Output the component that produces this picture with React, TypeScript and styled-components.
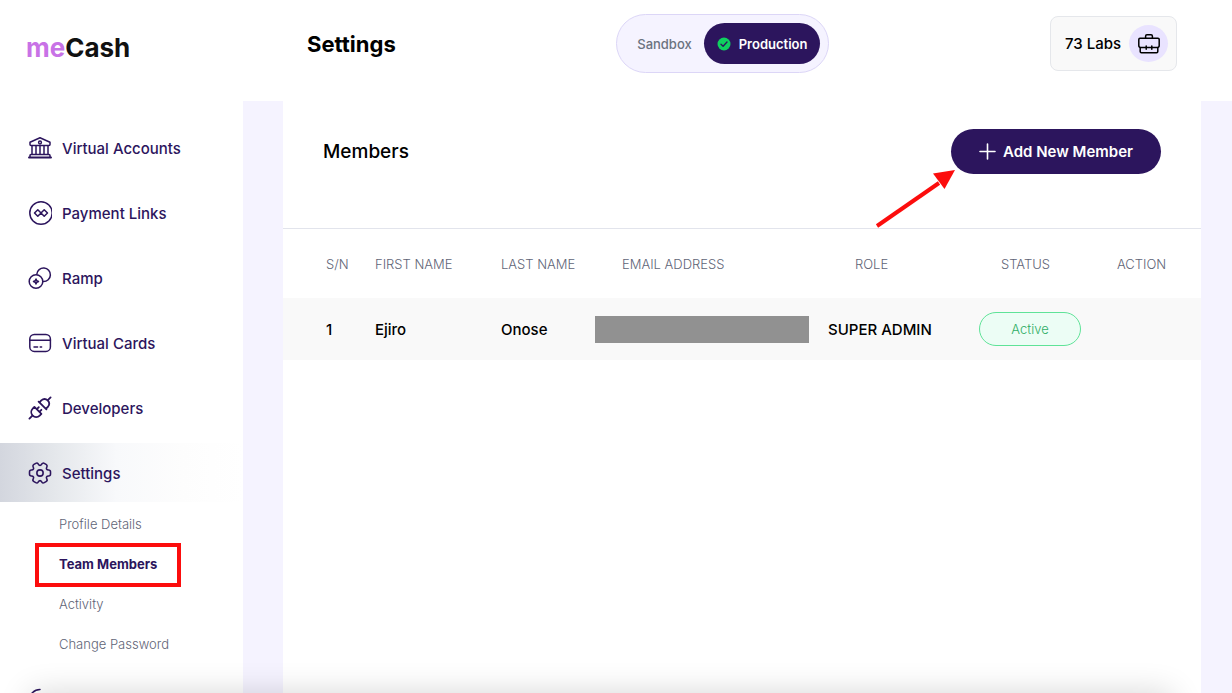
import React from "react";
import styled, { createGlobalStyle, css } from "styled-components";

const ink = "#2c155d";

const GlobalStyle = createGlobalStyle`
  *, *::before, *::after { box-sizing: border-box; }
  body {
    margin: 0;
    background: #fff;
    color: #000;
    font-family: Inter, "Liberation Sans", sans-serif;
    font-size: 15px;
  }
  button { font: inherit; border: 0; cursor: pointer; }
  a { color: inherit; text-decoration: none; }
  h1, h2, ul { margin: 0; padding: 0; }
  ul { list-style: none; }
`;

const Page = styled.div`
  display: grid;
  grid-template-columns: 243px 1fr;
  grid-template-rows: 101px 1fr;
  height: 100vh;
  overflow: hidden;
`;

const Brand = styled.a`
  display: flex;
  align-items: center;
  padding: 0 0 6px 26px;
  font-size: 26px;
  font-weight: 700;
  color: #111;
`;

const BrandAccent = styled.span`
  color: #c872e6;
`;

const Header = styled.header`
  display: flex;
  align-items: center;
  justify-content: space-between;
  padding: 0 55px 14px 64px;
`;

const PageTitle = styled.h1`
  font-size: 22px;
  line-height: 32px;
  font-weight: 700;
`;

const ModeSwitch = styled.div`
  display: flex;
  align-items: center;
  padding: 8px;
  border: 1px solid #dcd6f7;
  border-radius: 30px;
  background: #f5f3ff;
`;

const ModeButton = styled.button<{ $active?: boolean }>`
  display: flex;
  align-items: center;
  gap: 8px;
  height: 41px;
  padding: 0 12px;
  border-radius: 21px;
  background: transparent;
  color: #6b7280;
  font-size: 13px;
  font-weight: 500;
  ${(p) => p.$active && css`
    padding: 0 13px;
    background: ${ink};
    color: #fff;
    font-weight: 600;
  `}
`;

const OrgButton = styled.button`
  display: flex;
  align-items: center;
  gap: 8px;
  height: 55px;
  padding: 0 8px 0 14px;
  border: 1px solid #e5e7eb;
  border-radius: 8px;
  background: #f9f9f9;
  color: #000;
  font-size: 15px;
  font-weight: 500;
`;

const OrgBadge = styled.span`
  display: grid;
  place-items: center;
  width: 39px;
  height: 37px;
  border-radius: 50%;
  background: #e9e3ff;
`;

const Sidebar = styled.nav`
  padding-top: 17px;
  overflow: hidden;
`;

const NavList = styled.ul`
  display: flex;
  flex-direction: column;
  gap: 6px;
`;

const NavLink = styled.a<{ $active?: boolean }>`
  display: flex;
  align-items: center;
  gap: 10px;
  height: 59px;
  padding: 1px 0 0 28px;
  color: ${ink};
  font-weight: 500;
  ${(p) => p.$active && css`
    background: linear-gradient(90deg, #d3d6de 0%, #e4e7eb 22%, #f8f9fb 48%, #fdfdfd 75%, #fff 100%);
  `}
  svg { flex: none; }
`;

const SubList = styled.ul`
  padding: 2px 0 0 35px;
`;

const SubItem = styled.li`
  display: flex;
`;

const SubLink = styled.a<{ $active?: boolean }>`
  position: relative;
  padding: 0 24px;
  font-size: 13px;
  line-height: 40px;
  font-weight: ${(p) => (p.$active ? 700 : 300)};
  color: ${(p) => (p.$active ? ink : "#5f6577")};
`;

const Highlight = styled.span`
  position: absolute;
  inset: -1px 0 -3px;
  border: 4px solid #fc0d0d;
`;

const Main = styled.main`
  display: flex;
  padding: 0 31px 0 40px;
  background: #f5f3ff;
`;

const Panel = styled.section`
  flex: 1;
  background: #fff;
`;

const PanelHead = styled.div`
  display: flex;
  align-items: center;
  justify-content: space-between;
  padding: 28px 40px 54px;
  border-bottom: 1px solid #e2e4ec;
`;

const PanelTitle = styled.h2`
  font-size: 19px;
  line-height: 28px;
  font-weight: 500;
`;

const AddButton = styled.button`
  position: relative;
  display: flex;
  align-items: center;
  gap: 7px;
  height: 45px;
  padding: 0 28px;
  border-radius: 23px;
  background: ${ink};
  color: #fff;
  font-size: 15px;
  font-weight: 600;
`;

const Pointer = styled.svg`
  position: absolute;
  right: calc(100% - 6px);
  top: 40px;
`;

const Table = styled.table`
  width: 100%;
  table-layout: fixed;
  border-collapse: collapse;
`;

const Col = styled.col<{ $w?: number }>`
  width: ${(p) => (p.$w ? `${p.$w}px` : "auto")};
`;

const Th = styled.th<{ $pad?: number }>`
  height: 69px;
  padding: 0 0 0 ${(p) => p.$pad ?? 0}px;
  text-align: left;
  font-size: 13px;
  font-weight: 300;
  color: #5f6577;
`;

const Td = styled.td<{ $pad?: number }>`
  height: 62px;
  padding: 0 0 0 ${(p) => p.$pad ?? 0}px;
  background: #f9f9f9;
  font-weight: 500;
`;

const Redacted = styled.div`
  width: 214px;
  height: 27px;
  background: #919191;
`;

const Status = styled.span`
  display: grid;
  place-items: center;
  width: 102px;
  height: 34px;
  border: 1px solid #5fe398;
  border-radius: 17px;
  background: #ecfdf5;
  color: #2fae66;
  font-size: 13px;
  font-weight: 300;
`;

const BottomShade = styled.div`
  position: fixed;
  top: 100%;
  left: 30px;
  right: 60px;
  height: 40px;
  box-shadow: 0 0 32px rgba(0, 0, 0, 0.16);
`;

const Icon = ({ children, weight = 1.5 }: { children: React.ReactNode; weight?: number }) => (
  <svg width="24" height="24" viewBox="0 0 24 24" fill="none" stroke="currentColor"
    strokeWidth={weight} strokeLinecap="round" strokeLinejoin="round" aria-hidden="true">
    {children}
  </svg>
);

const BankIcon = () => (
  <Icon>
    <path d="M2 8.6V6.2L12 1.8l10 4.4v2.4a1 1 0 0 1-1 1H3a1 1 0 0 1-1-1Z" />
    <circle cx="12" cy="6.500" r="1.400" />
    <path d="M4 10v8.400M8 10v8.400M12 10v8.400M16 10v8.400M20 10v8.400M2 21v-1.600a1 1 0 0 1 1-1h18a1 1 0 0 1 1 1V21" />
    <path d="M1 21.400h22" strokeWidth="2" />
  </Icon>
);

const LinksIcon = () => (
  <Icon>
    <circle cx="13" cy="12" r="11.200" />
    <path d="m13 12-3.200-3.300L6.500 12l3.300 3.300L13 12l3.200-3.300 3.300 3.300-3.300 3.300Z" />
  </Icon>
);

const RampIcon = () => (
  <Icon>
    <path d="M8.800 8.200a6.800 6.800 0 1 1 6.600 7.400" />
    <circle cx="8" cy="15.500" r="6.800" />
    <path d="m8 13 .8 1.700 1.700.8-1.700.8L8 18l-.8-1.700-1.700-.8 1.700-.8Z" />
  </Icon>
);

const CardIcon = () => (
  <Icon>
    <rect x="1.800" y="3.400" width="20.600" height="17" rx="4.500" />
    <path d="M2 9.200h20.400M6 15.900h3.600M12.200 15.900h1.400" />
  </Icon>
);

const PlugIcon = () => (
  <Icon weight={1.8}>
    <path d="m1.400 22.600 3-3M19.600 4.400l3-3" />
    <path d="m6.400 10.900 7 7-1.700 1.700a5 5 0 0 1-7 0 5 5 0 0 1 0-7Z" />
    <path d="m10.600 5.600 7.800 7.800M11.600 6.300l1.700-1.900a5 5 0 0 1 6.500 0 5 5 0 0 1 0 6.600l-2 1.700" />
    <path d="m9 13 1.800-1.800M11.600 15.600l1.800-1.800" />
  </Icon>
);

const GearIcon = () => (
  <Icon>
    <g transform="translate(-.6 -.6) scale(1.050)">
      <circle cx="12" cy="12" r="3" />
      <path d="M2 12.880v-1.760c0-1.040.85-1.900 1.900-1.900 1.810 0 2.550-1.280 1.640-2.850-.52-.9-.21-2.070.7-2.590l1.730-.99c.79-.47 1.810-.19 2.280.6l.11.19c.9 1.570 2.380 1.570 3.290 0l.11-.19c.47-.79 1.490-1.070 2.280-.6l1.730.99c.91.52 1.220 1.690.7 2.590-.91 1.570-.17 2.850 1.640 2.850 1.040 0 1.900.85 1.900 1.900v1.760c0 1.040-.85 1.900-1.900 1.900-1.810 0-2.550 1.280-1.640 2.850.52.91.21 2.070-.7 2.590l-1.730.99c-.79.47-1.810.19-2.280-.6l-.11-.19c-.9-1.570-2.380-1.570-3.290 0l-.11.19c-.47.79-1.490 1.070-2.280.6l-1.730-.99a1.900 1.900 0 0 1-.7-2.590c.91-1.570.17-2.850-1.640-2.850-1.050 0-1.900-.86-1.900-1.900Z" />
    </g>
  </Icon>
);

const LogoutIcon = () => (
  <Icon>
    <path d="M12 1.500a10.500 10.500 0 1 0 0 21M9 12h13M18 8l4 4-4 4" />
  </Icon>
);

const BriefcaseIcon = () => (
  <Icon>
    <path d="M8.600 6V4.200a1.400 1.400 0 0 1 1.400-1.400h4a1.400 1.400 0 0 1 1.400 1.400V6" />
    <path d="M3 6.200h18a1.200 1.200 0 0 1 1.200 1.200v6.200a2 2 0 0 1-2 2H3.800a2 2 0 0 1-2-2V7.400A1.200 1.200 0 0 1 3 6.200Z" />
    <path d="M3.200 15.800v3.800a1.200 1.200 0 0 0 1.200 1.200h15.200a1.200 1.200 0 0 0 1.200-1.200v-3.800M9.200 14v3.200M14.800 14v3.200" />
  </Icon>
);

const CheckBadge = () => (
  <svg width="14" height="14" viewBox="0 0 14 14" aria-hidden="true">
    <circle cx="7" cy="7" r="6.500" fill="#0fd05f" />
    <path d="m4 7.300 2.100 2L10 5" fill="none" stroke={ink} strokeWidth="1.300" strokeLinecap="round" strokeLinejoin="round" />
  </svg>
);

const PlusIcon = () => (
  <svg width="17" height="17" viewBox="0 0 17 17" aria-hidden="true">
    <path d="M8.500 1v15M1 8.500h15" stroke="#fff" strokeWidth="1.600" strokeLinecap="round" />
  </svg>
);

const mainNav = [
  { label: "Virtual Accounts", icon: <BankIcon /> },
  { label: "Payment Links", icon: <LinksIcon /> },
  { label: "Ramp", icon: <RampIcon /> },
  { label: "Virtual Cards", icon: <CardIcon /> },
  { label: "Developers", icon: <PlugIcon /> },
];

const settingsNav = ["Profile Details", "Team Members", "Activity", "Change Password"];

export default function App() {
  return (
    <Page>
      <GlobalStyle />
      <Brand href="#"><span><BrandAccent>me</BrandAccent>Cash</span></Brand>
      <Header>
        <PageTitle>Settings</PageTitle>
        <ModeSwitch role="group" aria-label="Environment">
          <ModeButton type="button">Sandbox</ModeButton>
          <ModeButton type="button" $active aria-pressed="true">
            <CheckBadge />
            Production
          </ModeButton>
        </ModeSwitch>
        <OrgButton type="button">
          73 Labs
          <OrgBadge><BriefcaseIcon /></OrgBadge>
        </OrgButton>
      </Header>

      <Sidebar aria-label="Main">
        <NavList>
          {mainNav.map((item) => (
            <li key={item.label}>
              <NavLink href="#">{item.icon}{item.label}</NavLink>
            </li>
          ))}
          <li>
            <NavLink href="#" $active><GearIcon />Settings</NavLink>
            <SubList>
              {settingsNav.map((label) => {
                const active = label === "Team Members";
                return (
                  <SubItem key={label}>
                    <SubLink href="#" $active={active} aria-current={active ? "page" : undefined}>
                      {label}
                      {active && <Highlight />}
                    </SubLink>
                  </SubItem>
                );
              })}
            </SubList>
          </li>
          <li>
            <NavLink href="#"><LogoutIcon />Logout</NavLink>
          </li>
        </NavList>
      </Sidebar>

      <Main>
        <Panel>
          <PanelHead>
            <PanelTitle>Members</PanelTitle>
            <AddButton type="button">
              <PlusIcon />
              Add New Member
              <Pointer width="82" height="60" viewBox="0 0 82 60" aria-hidden="true">
                <path d="M2 57 64 14" stroke="#fc0d0d" strokeWidth="4" />
                <path d="M80 1 58 4.500 69.500 20Z" fill="#fc0d0d" />
              </Pointer>
            </AddButton>
          </PanelHead>
          <Table>
            <colgroup>
              <Col $w={92} />
              <Col $w={126} />
              <Col $w={94} />
              <Col $w={233} />
              <Col $w={151} />
              <Col $w={138} />
              <Col />
            </colgroup>
            <thead>
              <tr>
                <Th $pad={43}>S/N</Th>
                <Th>FIRST NAME</Th>
                <Th>LAST NAME</Th>
                <Th $pad={27}>EMAIL ADDRESS</Th>
                <Th $pad={27}>ROLE</Th>
                <Th $pad={22}>STATUS</Th>
                <Th>ACTION</Th>
              </tr>
            </thead>
            <tbody>
              <tr>
                <Td $pad={43}>1</Td>
                <Td>Ejiro</Td>
                <Td>Onose</Td>
                <Td><Redacted /></Td>
                <Td>SUPER ADMIN</Td>
                <Td><Status>Active</Status></Td>
                <Td />
              </tr>
            </tbody>
          </Table>
        </Panel>
      </Main>
      <BottomShade />
    </Page>
  );
}
